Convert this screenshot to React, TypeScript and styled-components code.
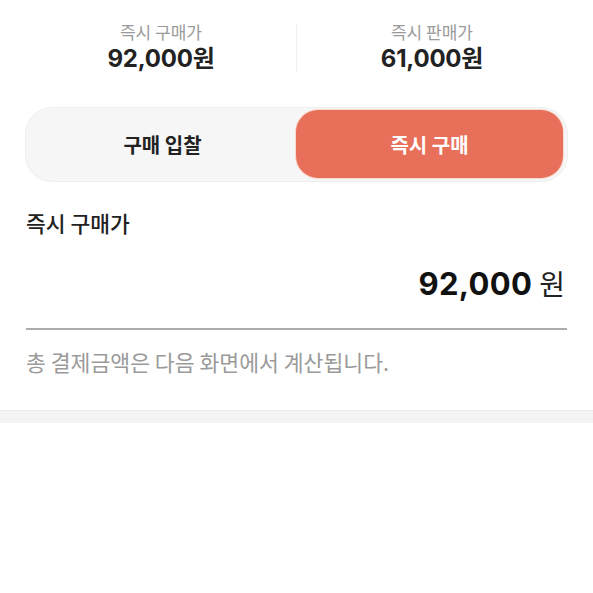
import styled, { createGlobalStyle } from "styled-components";

const GlobalStyle = createGlobalStyle`
  body {
    margin: 0;
    background: #ffffff;
    font-family: Inter, "Noto Sans CJK KR", sans-serif;
    color: #222222;
  }
`;

// styles

const Page = styled.div`
  width: 593px;
  min-height: 593px;
  background: #ffffff;
`;

const Content = styled.div`
  padding: 0 26px;
`;

const SummaryRow = styled.div`
  display: grid;
  grid-template-columns: 1fr 1px 1fr;
  align-items: center;
  padding-top: 21px;
  height: 51px;
`;

const SummaryDivider = styled.div`
  width: 1px;
  height: 49px;
  background: #efefef;
`;

const SummaryItem = styled.div`
  display: flex;
  flex-direction: column;
  align-items: center;
`;

const SummaryLabel = styled.div`
  font-family: "Noto Sans CJK KR", sans-serif;
  font-size: 17px;
  line-height: 22px;
  color: #9a9a9a;
`;

const SummaryValue = styled.div`
  margin-top: 2px;
  font-size: 24px;
  font-weight: 700;
  line-height: 28px;
  color: #222222;
  letter-spacing: -0.2px;
`;

const Toggle = styled.div`
  display: flex;
  margin-top: 36px;
  height: 73px;
  padding: 2px 4px 3px 3px;
  box-sizing: border-box;
  border-radius: 26px;
  background: #f6f6f6;
  box-shadow: 0 0 0 1px #eeeeee;
`;

const ToggleButton = styled.div<{ $active?: boolean }>`
  flex: 1;
  display: flex;
  align-items: center;
  justify-content: center;
  border-radius: 22px;
  font-family: "Noto Sans CJK KR", sans-serif;
  font-size: 20px;
  font-weight: 700;
  color: ${(p) => (p.$active ? "#ffffff" : "#222222")};
  background: ${(p) => (p.$active ? "#e8705a" : "transparent")};
  box-shadow: ${(p) => (p.$active ? "0 0 0 1px #f7d9cf" : "none")};
`;

const SectionTitle = styled.div`
  margin-top: 28px;
  font-family: "Noto Sans CJK KR", sans-serif;
  font-size: 21.5px;
  font-weight: 500;
  line-height: 28px;
  color: #222222;
`;

const PriceRow = styled.div`
  display: flex;
  justify-content: flex-end;
  align-items: baseline;
  gap: 7px;
  margin-top: 26px;
  padding-right: 2px;
  padding-bottom: 24px;
  border-bottom: 2px solid #acacac;
`;

const PriceNumber = styled.span`
  font-size: 31px;
  font-weight: 700;
  line-height: 40px;
  letter-spacing: 0.3px;
  color: #111111;
`;

const PriceUnit = styled.span`
  font-family: "Noto Sans CJK KR", sans-serif;
  font-size: 28px;
  font-weight: 400;
  line-height: 40px;
  color: #222222;
`;

const Notice = styled.div`
  margin-top: 18px;
  font-family: "Noto Sans CJK KR", sans-serif;
  font-size: 21.6px;
  line-height: 28px;
  color: #9a9a9a;
`;

const Band = styled.div`
  margin-top: 34px;
  height: 12px;
  background: #f4f4f4;
  border-top: 1px solid #eeeeee;
`;

const App = () => {
  return (
    <Page>
      <GlobalStyle />
      <Content>
        <SummaryRow>
          <SummaryItem>
            <SummaryLabel>즉시 구매가</SummaryLabel>
            <SummaryValue>92,000원</SummaryValue>
          </SummaryItem>
          <SummaryDivider />
          <SummaryItem>
            <SummaryLabel>즉시 판매가</SummaryLabel>
            <SummaryValue>61,000원</SummaryValue>
          </SummaryItem>
        </SummaryRow>
        <Toggle>
          <ToggleButton>구매 입찰</ToggleButton>
          <ToggleButton $active>즉시 구매</ToggleButton>
        </Toggle>
        <SectionTitle>즉시 구매가</SectionTitle>
        <PriceRow>
          <PriceNumber>92,000</PriceNumber>
          <PriceUnit>원</PriceUnit>
        </PriceRow>
        <Notice>총 결제금액은 다음 화면에서 계산됩니다.</Notice>
      </Content>
      <Band />
    </Page>
  );
};

export default App;
